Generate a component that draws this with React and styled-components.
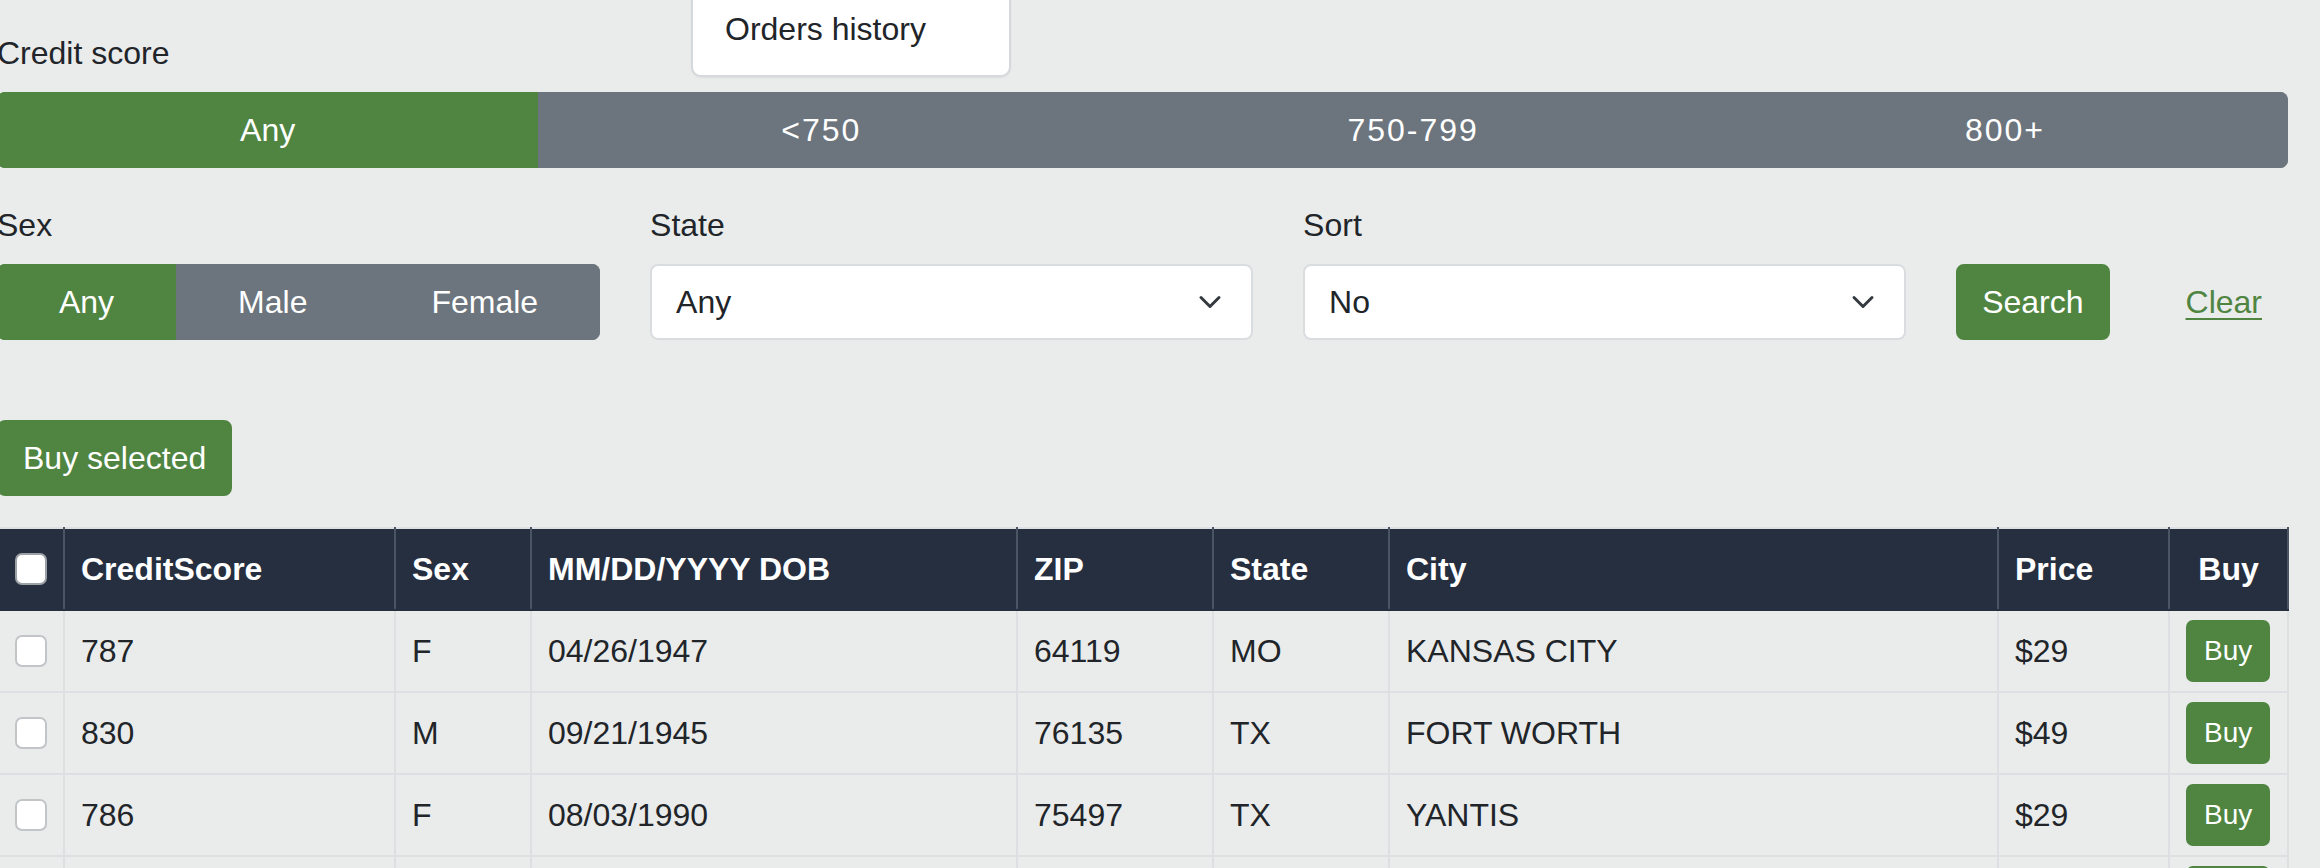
import React from "react";
import styled, { createGlobalStyle } from "styled-components";

const GlobalStyle = createGlobalStyle`
  html, body {
    margin: 0;
    padding: 0;
    background: #eaeceb;
    overflow: hidden;
  }
  body {
    font-family: "Liberation Sans", Arial, sans-serif;
    color: #212529;
  }
  *, *::before, *::after { box-sizing: border-box; }
`;

const GREEN = "#4f8541";
const GREY = "#6c757d";

const Page = styled.div`
  position: relative;
  margin-left: -3px;
  width: 2291px;
  padding-top: 29px;
  font-size: 32px;
  line-height: 48px;
`;

const DropdownMenu = styled.div`
  position: absolute;
  left: 694px;
  top: -20px;
  width: 320px;
  padding: 23px 32px 22px;
  background: #fff;
  border: 2px solid #d6d9dc;
  border-radius: 10px;
  box-shadow: 0 1px 2px rgba(0, 0, 0, 0.06);
  color: #212529;
  font-size: 32px;
  line-height: 48px;
  white-space: nowrap;
  z-index: 5;
`;

const Label = styled.div`
  margin-bottom: 15px;
  font-size: 32px;
  line-height: 48px;
  color: #212529;
`;

const Section = styled.div`
  margin-top: ${(p) => p.$top || 0}px;
`;

const ButtonGroup = styled.div`
  display: flex;
  width: 100%;
  border-radius: 8px;
  overflow: hidden;
`;

const GroupButton = styled.button`
  flex: 1 1 auto;
  margin: 0;
  padding: 12px 24px;
  border: 2px solid ${(p) => (p.$active ? GREEN : GREY)};
  background: ${(p) => (p.$active ? GREEN : GREY)};
  color: #fff;
  font-family: inherit;
  font-size: 32px;
  line-height: 48px;
  letter-spacing: ${(p) => (p.$numeric ? "2px" : "normal")};
  white-space: nowrap;
  cursor: pointer;
`;

const FilterRow = styled.div`
  display: grid;
  grid-template-columns: repeat(3, 1fr) auto auto;
  column-gap: 50px;
  align-items: end;
`;

const Field = styled.div`
  display: flex;
  flex-direction: column;
`;

const SelectBox = styled.div`
  display: flex;
  align-items: center;
  justify-content: space-between;
  height: 76px;
  padding: 12px 29px 12px 24px;
  background: #fff;
  border: 2px solid #dadde0;
  border-radius: 8px;
  font-size: 32px;
  line-height: 48px;
  color: #212529;
`;

const Chevron = () => (
  <svg width="24" height="24" viewBox="0 0 16 16" aria-hidden="true">
    <path
      d="M2 5l6 6 6-6"
      fill="none"
      stroke="#343a40"
      strokeWidth="2"
      strokeLinecap="round"
      strokeLinejoin="round"
    />
  </svg>
);

const Button = styled.button`
  margin: 0;
  padding: 12px 24px;
  height: 76px;
  border: 2px solid ${GREEN};
  border-radius: 8px;
  background: ${GREEN};
  color: #fff;
  font-family: inherit;
  font-size: 32px;
  line-height: 48px;
  white-space: nowrap;
  cursor: pointer;
`;

const LinkButton = styled.button`
  margin: 0;
  padding: 12px 24px;
  height: 76px;
  border: 2px solid transparent;
  background: transparent;
  color: ${GREEN};
  font-family: inherit;
  font-size: 32px;
  line-height: 48px;
  text-decoration: underline;
  text-underline-offset: 5px;
  text-decoration-thickness: 2px;
  cursor: pointer;
`;

const Table = styled.table`
  width: 2290px;
  table-layout: fixed;
  border-collapse: collapse;
  font-size: 32px;
  line-height: 48px;
`;

const Col = styled.col`
  width: ${(p) => p.$w}px;
`;

const Th = styled.th`
  padding: 16px;
  background: #252f3f;
  color: #fff;
  font-weight: 700;
  text-align: ${(p) => p.$align || "left"};
  border-top: 2px solid #dde0e3;
  border-left: 2px solid #4b5462;
  border-right: 2px solid #4b5462;
  border-bottom: 2px solid #252f3f;
  white-space: nowrap;
  vertical-align: middle;
`;

const Td = styled.td`
  height: 82px;
  padding: ${(p) => (p.$tight ? "8px 16px" : "16px")};
  border: 2px solid #dde0e3;
  color: #212529;
  white-space: nowrap;
  vertical-align: middle;
  text-align: ${(p) => p.$align || "left"};
`;

const Check = styled.input.attrs({ type: "checkbox" })`
  appearance: none;
  -webkit-appearance: none;
  display: block;
  width: 32px;
  height: 32px;
  margin: 0;
  background: #fff;
  border: 2px solid ${(p) => (p.$head ? "#9ca1a6" : "#c2c5c8")};
  border-radius: 7px;
`;

const BuyButton = styled.button`
  display: block;
  margin: 0;
  padding: 8px 16px;
  border: 2px solid ${GREEN};
  border-radius: 7px;
  background: ${GREEN};
  color: #fff;
  font-family: inherit;
  font-size: 28px;
  line-height: 42px;
  cursor: pointer;
`;

const creditOptions = ["Any", "<750", "750-799", "800+"];
const sexOptions = ["Any", "Male", "Female"];

const columns = [
  { key: "cb", w: 66 },
  { key: "score", w: 331, label: "CreditScore" },
  { key: "sex", w: 136, label: "Sex" },
  { key: "dob", w: 486, label: "MM/DD/YYYY DOB" },
  { key: "zip", w: 196, label: "ZIP" },
  { key: "state", w: 176, label: "State" },
  { key: "city", w: 609, label: "City" },
  { key: "price", w: 171, label: "Price" },
  { key: "buy", w: 119, label: "Buy", align: "center" },
];

const rows = [
  { score: "787", sex: "F", dob: "04/26/1947", zip: "64119", state: "MO", city: "KANSAS CITY", price: "$29" },
  { score: "830", sex: "M", dob: "09/21/1945", zip: "76135", state: "TX", city: "FORT WORTH", price: "$49" },
  { score: "786", sex: "F", dob: "08/03/1990", zip: "75497", state: "TX", city: "YANTIS", price: "$29" },
  { score: "812", sex: "M", dob: "11/12/1962", zip: "30301", state: "GA", city: "ATLANTA", price: "$49" },
];

export default function App() {
  return (
    <>
      <GlobalStyle />
      <Page>
        <DropdownMenu>Orders history</DropdownMenu>

        <Label>Credit score</Label>
        <ButtonGroup>
          {creditOptions.map((o, i) => (
            <GroupButton key={o} $active={i === 0} $numeric={/\d/.test(o)}>
              {o}
            </GroupButton>
          ))}
        </ButtonGroup>

        <Section $top={33}>
          <FilterRow>
            <Field>
              <Label>Sex</Label>
              <ButtonGroup>
                {sexOptions.map((o, i) => (
                  <GroupButton key={o} $active={i === 0}>
                    {o}
                  </GroupButton>
                ))}
              </ButtonGroup>
            </Field>
            <Field>
              <Label>State</Label>
              <SelectBox>
                <span>Any</span>
                <Chevron />
              </SelectBox>
            </Field>
            <Field>
              <Label>Sort</Label>
              <SelectBox>
                <span>No</span>
                <Chevron />
              </SelectBox>
            </Field>
            <Button>Search</Button>
            <LinkButton>Clear</LinkButton>
          </FilterRow>
        </Section>

        <Section $top={80}>
          <Button>Buy selected</Button>
        </Section>

        <Section $top={31}>
          <Table>
            <colgroup>
              {columns.map((c) => (
                <Col key={c.key} $w={c.w} />
              ))}
            </colgroup>
            <thead>
              <tr>
                {columns.map((c) =>
                  c.key === "cb" ? (
                    <Th key={c.key}>
                      <Check $head />
                    </Th>
                  ) : (
                    <Th key={c.key} $align={c.align}>
                      {c.label}
                    </Th>
                  )
                )}
              </tr>
            </thead>
            <tbody>
              {rows.map((r, i) => (
                <tr key={i}>
                  <Td>
                    <Check />
                  </Td>
                  <Td>{r.score}</Td>
                  <Td>{r.sex}</Td>
                  <Td>{r.dob}</Td>
                  <Td>{r.zip}</Td>
                  <Td>{r.state}</Td>
                  <Td>{r.city}</Td>
                  <Td>{r.price}</Td>
                  <Td $tight>
                    <BuyButton>Buy</BuyButton>
                  </Td>
                </tr>
              ))}
            </tbody>
          </Table>
        </Section>
      </Page>
    </>
  );
}
